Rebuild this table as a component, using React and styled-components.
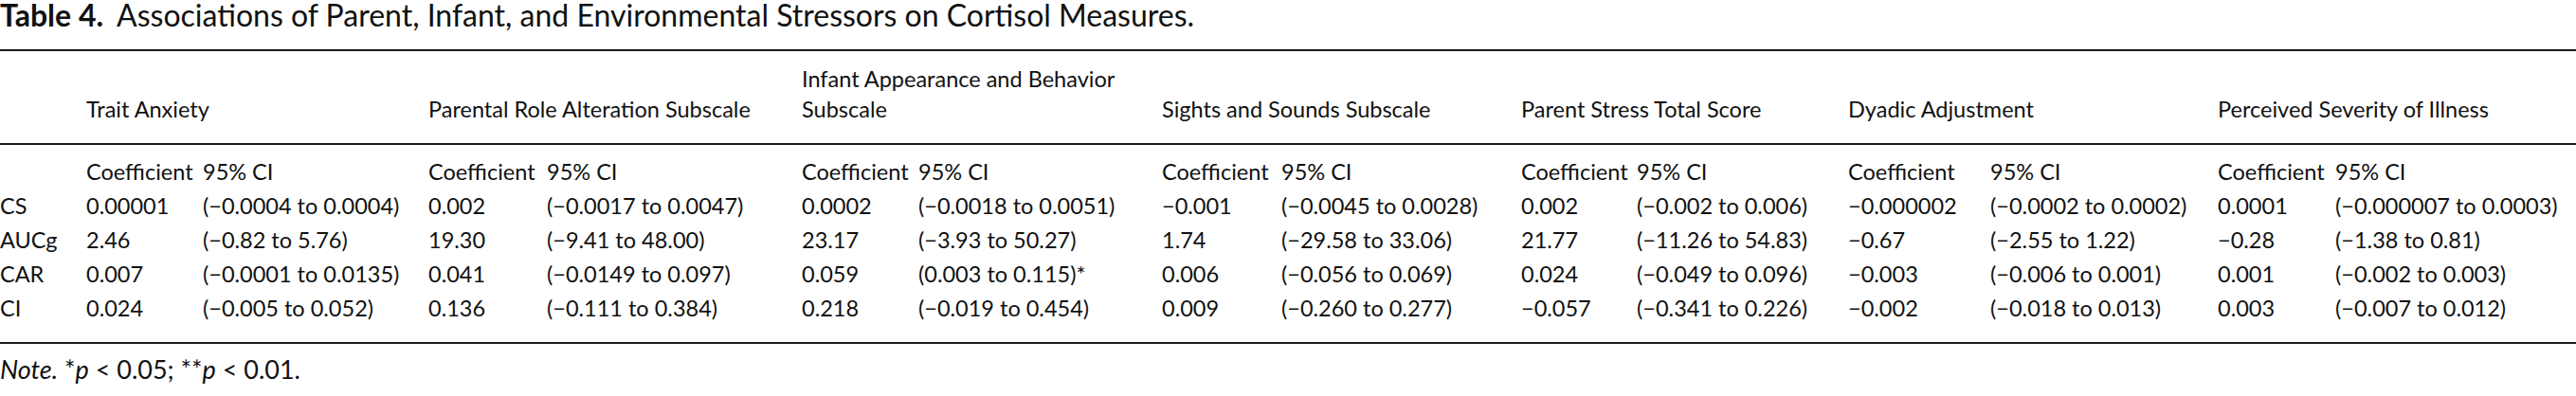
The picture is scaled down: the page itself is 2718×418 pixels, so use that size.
import React from "react";
import styled, { createGlobalStyle } from "styled-components";

const GlobalStyle = createGlobalStyle`
  html, body {
    margin: 0;
    padding: 0;
    background: #ffffff;
  }
  body {
    font-family: Lato, "Liberation Sans", sans-serif;
    color: #111111;
  }
`;

const M = "\u2212";

// column widths taken from the printed table
const widths = [91, 123, 238, 125, 269, 123, 257, 126, 253, 122, 223, 150, 240, 124, 254];

const groups = [
  "Trait Anxiety",
  "Parental Role Alteration Subscale",
  ["Infant Appearance and Behavior", "Subscale"],
  "Sights and Sounds Subscale",
  "Parent Stress Total Score",
  "Dyadic Adjustment",
  "Perceived Severity of Illness",
];

const rows = [
  {
    label: "CS",
    values: [
      ["0.00001", `(${M}0.0004 to 0.0004)`],
      ["0.002", `(${M}0.0017 to 0.0047)`],
      ["0.0002", `(${M}0.0018 to 0.0051)`],
      [`${M}0.001`, `(${M}0.0045 to 0.0028)`],
      ["0.002", `(${M}0.002 to 0.006)`],
      [`${M}0.000002`, `(${M}0.0002 to 0.0002)`],
      ["0.0001", `(${M}0.000007 to 0.0003)`],
    ],
  },
  {
    label: "AUCg",
    values: [
      ["2.46", `(${M}0.82 to 5.76)`],
      ["19.30", `(${M}9.41 to 48.00)`],
      ["23.17", `(${M}3.93 to 50.27)`],
      ["1.74", `(${M}29.58 to 33.06)`],
      ["21.77", `(${M}11.26 to 54.83)`],
      [`${M}0.67`, `(${M}2.55 to 1.22)`],
      [`${M}0.28`, `(${M}1.38 to 0.81)`],
    ],
  },
  {
    label: "CAR",
    values: [
      ["0.007", `(${M}0.0001 to 0.0135)`],
      ["0.041", `(${M}0.0149 to 0.097)`],
      ["0.059", "(0.003 to 0.115)*"],
      ["0.006", `(${M}0.056 to 0.069)`],
      ["0.024", `(${M}0.049 to 0.096)`],
      [`${M}0.003`, `(${M}0.006 to 0.001)`],
      ["0.001", `(${M}0.002 to 0.003)`],
    ],
  },
  {
    label: "CI",
    values: [
      ["0.024", `(${M}0.005 to 0.052)`],
      ["0.136", `(${M}0.111 to 0.384)`],
      ["0.218", `(${M}0.019 to 0.454)`],
      ["0.009", `(${M}0.260 to 0.277)`],
      [`${M}0.057`, `(${M}0.341 to 0.226)`],
      [`${M}0.002`, `(${M}0.018 to 0.013)`],
      ["0.003", `(${M}0.007 to 0.012)`],
    ],
  },
];

const App = () => {
  return (
    <>
      <GlobalStyle />
      <Wrapper>
        <Caption>
          <strong>Table 4.</strong>
          <span>Associations of Parent, Infant, and Environmental Stressors on Cortisol Measures.</span>
        </Caption>
        <DataTable>
          <colgroup>
            {widths.map((w, i) => (
              <col key={i} style={{ width: w }} />
            ))}
          </colgroup>
          <thead>
            <tr>
              <HeadCell />
              {groups.map((g, i) => (
                <HeadCell key={i} colSpan={2}>
                  {Array.isArray(g) ? (
                    <>
                      {g[0]}
                      <br />
                      {g[1]}
                    </>
                  ) : (
                    g
                  )}
                </HeadCell>
              ))}
            </tr>
          </thead>
          <tbody>
            <tr>
              <SubCell />
              {groups.map((g, i) => (
                <React.Fragment key={i}>
                  <SubCell>Coefficient</SubCell>
                  <SubCell>95% CI</SubCell>
                </React.Fragment>
              ))}
            </tr>
            {rows.map((row, r) => (
              <tr key={row.label}>
                <Cell $last={r === rows.length - 1}>{row.label}</Cell>
                {row.values.map(([coef, ci], i) => (
                  <React.Fragment key={i}>
                    <Cell $last={r === rows.length - 1}>{coef}</Cell>
                    <Cell $last={r === rows.length - 1}>{ci}</Cell>
                  </React.Fragment>
                ))}
              </tr>
            ))}
          </tbody>
        </DataTable>
        <Note>
          <em>Note.</em> *<em>p</em> &lt; 0.05; **<em>p</em> &lt; 0.01.
        </Note>
      </Wrapper>
    </>
  );
};

const Wrapper = styled.div`
  width: 2718px;
  display: flex;
  flex-direction: column;
`;

const Caption = styled.div`
  font-size: 32px;
  line-height: 40px;
  margin-top: -4px;
  margin-bottom: 16px;
  white-space: nowrap;

  strong {
    font-weight: 700;
    margin-right: 14px;
  }
`;

const DataTable = styled.table`
  width: 2718px;
  table-layout: fixed;
  border-collapse: collapse;
  border-top: 2px solid #1a1a1a;
  border-bottom: 2px solid #1a1a1a;
  font-size: 23.5px;
  white-space: nowrap;
`;

const HeadCell = styled.th`
  text-align: left;
  font-weight: 400;
  vertical-align: bottom;
  line-height: 32px;
  padding: 13px 0 20px;
  border-bottom: 2px solid #1a1a1a;
`;

const SubCell = styled.td`
  line-height: 36px;
  padding: 10px 0 0;
`;

const Cell = styled.td`
  line-height: 36px;
  padding: 0 0 ${(p) => (p.$last ? "18px" : "0")};
`;

const Note = styled.p`
  margin: 9px 0 0;
  font-size: 27px;
  line-height: 36px;
`;

export default App;
